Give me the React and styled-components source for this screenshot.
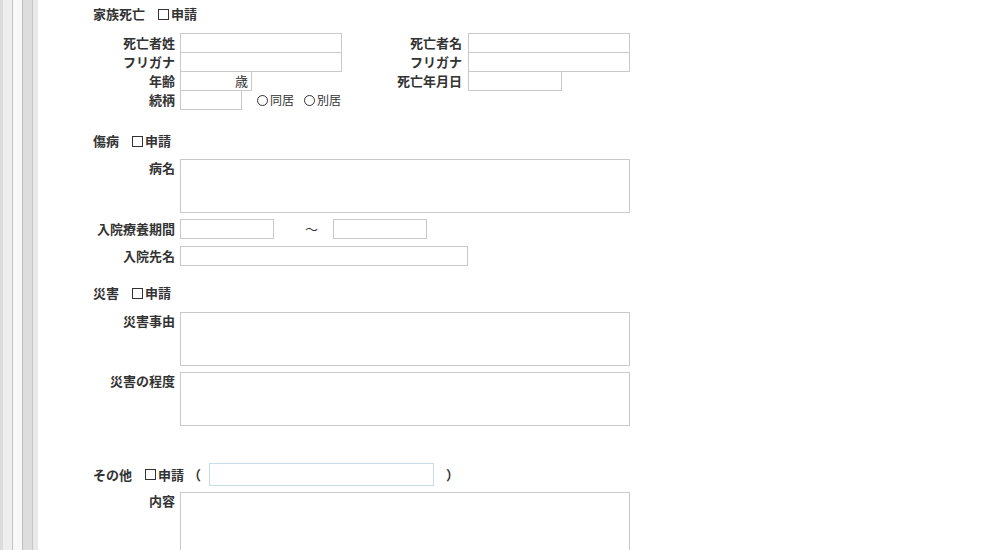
import React from 'react';
import styled, { createGlobalStyle } from 'styled-components';

const Global = createGlobalStyle`
  html, body { margin: 0; padding: 0; background: #fff; }
  body {
    font-family: "Noto Sans CJK JP", "Noto Sans", sans-serif;
    color: #333;
  }
`;

const Page = styled.div`
  display: flex;
  width: 1000px;
  height: 550px;
  overflow: hidden;
  background: #fff;
`;

const Rail = styled.div`
  flex: 0 0 38px;
  background: linear-gradient(
    to right,
    #dcdcdc 0 3px,
    #eeeeee 3px 12px,
    #c4c4c4 12px 13px,
    #f8f8f8 13px 22px,
    #bdbdbd 22px 23px,
    #dddddd 23px 32px,
    #c6c6c6 32px 33px,
    #e9e9e9 33px 38px
  );
`;

const Content = styled.div`
  flex: 1;
  display: flex;
  flex-direction: column;
  padding: 5px 0 0 55px;
`;

const SectionHead = styled.div`
  display: flex;
  align-items: center;
  height: ${(p) => p.$h || 20}px;
  margin-top: ${(p) => p.$mt || 0}px;
  font-size: 13px;
  font-weight: 700;
  line-height: 18px;
`;

const Title = styled.span`
  margin-right: 13px;
`;

const CheckBox = styled.span`
  display: inline-block;
  width: 11px;
  height: 11px;
  box-sizing: border-box;
  border: 1px solid #333;
  margin-right: 2px;
  background: #fff;
`;

const Paren = styled.span`
  margin: ${(p) => p.$m};
`;

const FamilyGrid = styled.div`
  display: flex;
  margin-top: 10px;
`;

const Col = styled.div`
  display: flex;
  flex-direction: column;
`;

const StackRow = styled.div`
  display: flex;
  align-items: center;
  & + & {
    margin-top: -1px;
  }
`;

const FieldRow = styled.div`
  display: flex;
  align-items: ${(p) => (p.$top ? 'flex-start' : 'center')};
  margin-top: ${(p) => p.$mt || 0}px;
`;

const Label = styled.div`
  box-sizing: border-box;
  width: ${(p) => p.$w || 87}px;
  padding-right: ${(p) => p.$pr || 5}px;
  text-align: right;
  font-size: 13px;
  font-weight: 700;
  line-height: 18px;
  white-space: nowrap;
`;

const Box = styled.div`
  box-sizing: border-box;
  width: ${(p) => p.$w}px;
  height: ${(p) => p.$h || 20}px;
  border: 1px solid ${(p) => p.$border || '#c9c9c9'};
  background: #fff;
  display: flex;
  align-items: center;
  justify-content: flex-end;
  padding-right: 3px;
  font-size: 13px;
  line-height: 18px;
`;

const Radios = styled.div`
  display: flex;
  align-items: center;
  margin-left: 15px;
  gap: 10px;
`;

const RadioItem = styled.label`
  display: flex;
  align-items: center;
  font-size: 12px;
  line-height: 16px;
  color: #333;
`;

const Circle = styled.span`
  display: inline-block;
  width: 11px;
  height: 11px;
  box-sizing: border-box;
  border: 1px solid #333;
  border-radius: 50%;
  margin-right: 2px;
`;

const Tilde = styled.span`
  font-size: 13px;
  font-weight: 400;
  margin: 0 15px 0 31px;
  line-height: 18px;
`;

function Radio({ children }) {
  return (
    <RadioItem>
      <Circle />
      {children}
    </RadioItem>
  );
}

export default function App() {
  return (
    <>
      <Global />
      <Page>
        <Rail />
        <Content>
          <SectionHead>
            <Title>家族死亡</Title>
            <CheckBox />
            申請
          </SectionHead>
          <FamilyGrid>
            <Col>
              <StackRow>
                <Label>死亡者姓</Label>
                <Box $w={162} />
              </StackRow>
              <StackRow>
                <Label>フリガナ</Label>
                <Box $w={162} />
              </StackRow>
              <StackRow>
                <Label>年齢</Label>
                <Box $w={72}>歳</Box>
              </StackRow>
              <StackRow>
                <Label>続柄</Label>
                <Box $w={62} />
                <Radios>
                  <Radio>同居</Radio>
                  <Radio>別居</Radio>
                </Radios>
              </StackRow>
            </Col>
            <Col>
              <StackRow>
                <Label $w={126} $pr={6}>死亡者名</Label>
                <Box $w={162} />
              </StackRow>
              <StackRow>
                <Label $w={126} $pr={6}>フリガナ</Label>
                <Box $w={162} />
              </StackRow>
              <StackRow>
                <Label $w={126} $pr={6}>死亡年月日</Label>
                <Box $w={94} />
              </StackRow>
            </Col>
          </FamilyGrid>

          <SectionHead $mt={22}>
            <Title>傷病</Title>
            <CheckBox />
            申請
          </SectionHead>
          <FieldRow $top $mt={9}>
            <Label>病名</Label>
            <Box $w={450} $h={54} />
          </FieldRow>
          <FieldRow $mt={6}>
            <Label>入院療養期間</Label>
            <Box $w={94} />
            <Tilde>〜</Tilde>
            <Box $w={94} />
          </FieldRow>
          <FieldRow $mt={7}>
            <Label>入院先名</Label>
            <Box $w={288} />
          </FieldRow>

          <SectionHead $mt={18}>
            <Title>災害</Title>
            <CheckBox />
            申請
          </SectionHead>
          <FieldRow $top $mt={10}>
            <Label>災害事由</Label>
            <Box $w={450} $h={54} />
          </FieldRow>
          <FieldRow $top $mt={6}>
            <Label>災害の程度</Label>
            <Box $w={450} $h={54} />
          </FieldRow>

          <SectionHead $mt={37} $h={23}>
            <Title>その他</Title>
            <CheckBox />
            申請
            <Paren $m="0 8px 0 4px">（</Paren>
            <Box $w={225} $h={23} $border="#c8dde9" />
            <Paren $m="0 0 0 12px">）</Paren>
          </SectionHead>
          <FieldRow $top $mt={6}>
            <Label>内容</Label>
            <Box $w={450} $h={80} />
          </FieldRow>
        </Content>
      </Page>
    </>
  );
}
